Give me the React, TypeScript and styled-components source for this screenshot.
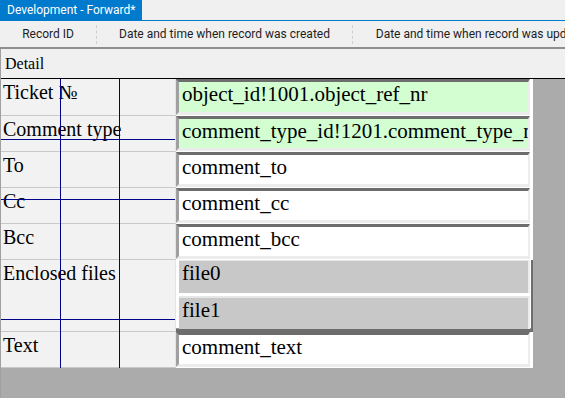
import React from 'react'
import styled, { createGlobalStyle } from 'styled-components'

const GlobalStyle = createGlobalStyle`
  html, body {
    margin: 0;
    padding: 0;
    overflow: hidden;
    background: #f0f0f0;
  }
`

interface FieldRow {
  label: string
  value?: string
  files?: string[]
  lookup?: boolean
  height: number
}

const rows: FieldRow[] = [
  { label: 'Ticket №', value: 'object_id!1001.object_ref_nr', lookup: true, height: 37 },
  { label: 'Comment type', value: 'comment_type_id!1201.comment_type_nr', lookup: true, height: 36 },
  { label: 'To', value: 'comment_to', height: 36 },
  { label: 'Cc', value: 'comment_cc', height: 36 },
  { label: 'Bcc', value: 'comment_bcc', height: 36 },
  { label: 'Enclosed files', files: ['file0', 'file1'], height: 72 },
  { label: 'Text', value: 'comment_text', height: 36 },
]

const columns = [
  { title: 'Record ID', width: 96 },
  { title: 'Date and time when record was created', width: 255 },
  { title: 'Date and time when record was updated', width: 260 },
]

// designer grid lines drawn over the label column
const vLines = [59, 118]
const hLines = [60, 120, 240]

const App: React.FC = () => {
  return (
    <>
      <GlobalStyle />
      <StyledWindow>
        <StyledTabStrip>
          <StyledTab>Development - Forward*</StyledTab>
        </StyledTabStrip>
        <StyledHeader>
          {columns.map((col, i) => (
            <React.Fragment key={col.title}>
              {i > 0 && <StyledSeparator />}
              <StyledColumn width={col.width}>{col.title}</StyledColumn>
            </React.Fragment>
          ))}
        </StyledHeader>
        <StyledPanel>
          <StyledDetailBar>Detail</StyledDetailBar>
          <StyledCanvas>
            <StyledForm rowHeights={rows.map((r) => r.height)}>
              {rows.map((row) => (
                <React.Fragment key={row.label}>
                  <StyledLabel>{row.label}</StyledLabel>
                  <StyledFieldCell>
                    {row.files ? (
                      <StyledList>
                        {row.files.map((f, i) => (
                          <StyledListItem key={f} first={i === 0}>
                            {f}
                          </StyledListItem>
                        ))}
                      </StyledList>
                    ) : (
                      <StyledField lookup={row.lookup}>{row.value}</StyledField>
                    )}
                  </StyledFieldCell>
                </React.Fragment>
              ))}
              <StyledGrid>
                {vLines.map((x) => (
                  <StyledVLine key={x} style={{ left: x }} />
                ))}
                {hLines.map((y) => (
                  <StyledHLine key={y} style={{ top: y }} />
                ))}
              </StyledGrid>
            </StyledForm>
          </StyledCanvas>
        </StyledPanel>
      </StyledWindow>
    </>
  )
}

const StyledWindow = styled.div`
  width: 565px;
  height: 398px;
  display: flex;
  flex-direction: column;
  overflow: hidden;
  background: #f0f0f0;
`

const StyledTabStrip = styled.div`
  display: flex;
  height: 20px;
  border-bottom: 1px solid #007acc;
  flex-shrink: 0;
`

const StyledTab = styled.div`
  background: #007acc;
  color: #ffffff;
  font-family: Roboto, 'Liberation Sans', sans-serif;
  font-size: 12px;
  line-height: 20px;
  padding: 0 7px;
  width: 142px;
  box-sizing: border-box;
  white-space: nowrap;
`

const StyledHeader = styled.div`
  display: flex;
  align-items: center;
  height: 26px;
  border-bottom: 2px solid #8f8f8f;
  flex-shrink: 0;
  font-family: Roboto, 'Liberation Sans', sans-serif;
  font-size: 12px;
  color: #1e1e1e;
  white-space: nowrap;
`

const StyledColumn = styled.div<{ width: number }>`
  flex: 0 0 ${(p) => p.width}px;
  text-align: center;
  overflow: hidden;
`

const StyledSeparator = styled.div`
  flex: 0 0 0;
  height: 19px;
  border-left: 1px dashed #cfcfcf;
`

const StyledPanel = styled.div`
  flex: 1;
  display: flex;
  flex-direction: column;
  border-left: 1px solid #a0a0a0;
  min-height: 0;
`

const StyledDetailBar = styled.div`
  height: 29px;
  box-sizing: border-box;
  padding: 6px 0 0 4px;
  font-family: 'Liberation Serif', 'Times New Roman', serif;
  font-size: 16px;
  color: #000;
  flex-shrink: 0;
`

const StyledCanvas = styled.div`
  flex: 1;
  background: #ababab;
  border-top: 1px solid #000;
`

const StyledForm = styled.div<{ rowHeights: number[] }>`
  position: relative;
  display: grid;
  grid-template-columns: 175px 357px;
  grid-template-rows: ${(p) => p.rowHeights.map((h) => `${h}px`).join(' ')};
  width: 532px;
  font-family: 'Liberation Serif', 'Times New Roman', serif;
  font-size: 20px;
  line-height: 23px;
  color: #000;
`

const StyledLabel = styled.div`
  background: #f2f2f2;
  border-bottom: 1px solid #c8c8c8;
  border-right: 1px solid #e4e4e4;
  padding: 2px 0 0 2px;
  white-space: nowrap;
  overflow: hidden;
`

const StyledFieldCell = styled.div`
  display: flex;
  background: #ffffff;
  padding: 0 3px 1px 0;
  min-width: 0;
  font-size: 21px;
`

const StyledField = styled.div<{ lookup?: boolean }>`
  flex: 1;
  min-width: 0;
  background: ${(p) => (p.lookup ? '#d2fed2' : '#ffffff')};
  border-style: solid;
  border-width: 3px 2px 3px 3px;
  border-color: #6d6d6d #ececec #ececec #a0a0a0;
  padding: 1px 0 0 3px;
  white-space: nowrap;
  overflow: hidden;
`

const StyledList = styled.div`
  flex: 1;
  display: flex;
  flex-direction: column;
  gap: 3px;
  padding-left: 3px;
  margin-right: -3px;
  margin-bottom: -1px;
  border-right: 2px solid #6d6d6d;
  border-bottom: 3px solid #6d6d6d;
  box-shadow: inset 0 -1px 0 #9a9a9a;
  background: #ffffff;
`

const StyledListItem = styled.div<{ first: boolean }>`
  flex: 1;
  background: #c8c8c8;
  border-top: ${(p) => (p.first ? '1px' : '2px')} solid #e6e6e6;
  border-right: 2px solid #ececec;
  margin-right: 1px;
  padding: 1px 0 0 3px;
  white-space: nowrap;
`

const StyledGrid = styled.div`
  position: absolute;
  left: 0;
  top: 0;
  width: 174px;
  height: 100%;
  pointer-events: none;
`

const StyledVLine = styled.div`
  position: absolute;
  top: 0;
  bottom: 0;
  width: 1px;
  background: #00008b;
`

const StyledHLine = styled.div`
  position: absolute;
  left: 0;
  right: 0;
  height: 1px;
  background: #00008b;
`

export default App
